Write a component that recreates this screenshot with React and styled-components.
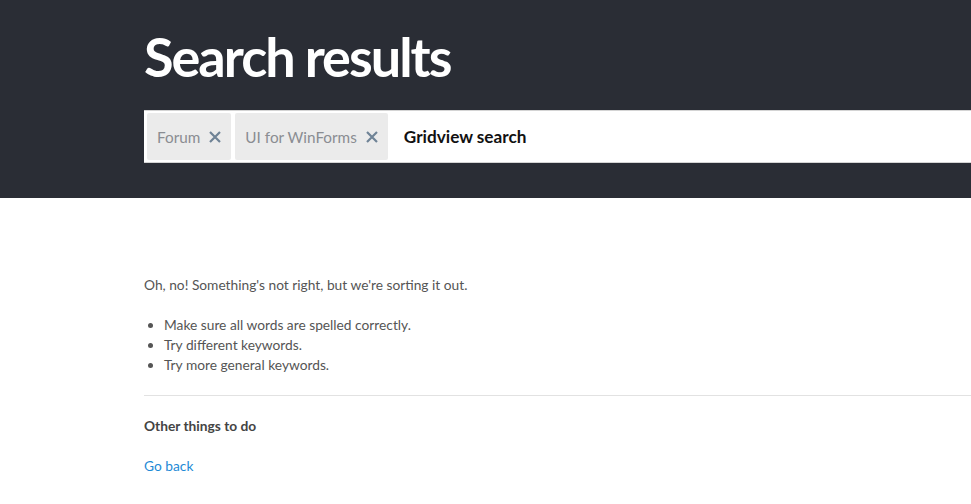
import React from "react";
import styled, { createGlobalStyle } from "styled-components";

const GlobalStyle = createGlobalStyle`
  body {
    margin: 0;
    font-family: "Lato", "Open Sans", sans-serif;
    background: #fff;
  }
`;

const Header = styled.header`
  background: #2a2d35;
  height: 198px;
  padding-left: 144px;
  box-sizing: border-box;
  padding-top: 26px;
`;

const Title = styled.h1`
  margin: 0;
  color: #fff;
  font-size: 54px;
  font-weight: 700;
  line-height: 62px;
  letter-spacing: -2px;
`;

const SearchBox = styled.div`
  margin-top: 22px;
  height: 53px;
  background: #fff;
  border-top: 1px solid #d4d4d4;
  border-bottom: 1px solid #d4d4d4;
  box-sizing: border-box;
  display: flex;
  align-items: center;
  padding: 0 3px;
  gap: 4px;
`;

const Tag = styled.span`
  display: flex;
  align-items: center;
  gap: 9px;
  height: 47px;
  padding: 0 10px;
  background: #ebebeb;
  border-radius: 2px;
  color: #8a8d92;
  font-size: 15.3px;
`;

const Query = styled.span`
  margin-left: 12px;
  color: #111;
  font-size: 17.2px;
  font-weight: 700;
`;

const Main = styled.main`
  padding: 77px 0 0 144px;
  color: #555;
  font-size: 13.75px;
`;

const Lead = styled.p`
  margin: 0 0 20px;
  line-height: 20px;
`;

const Tips = styled.ul`
  margin: 0;
  padding-left: 20px;
  line-height: 20px;
`;

const Divider = styled.hr`
  border: 0;
  border-top: 1px solid #e2e2e2;
  margin: 20px 0 0;
`;

const SubTitle = styled.h3`
  margin: 20px 0 0;
  font-size: 13.75px;
  font-weight: 700;
  color: #444;
  line-height: 20px;
`;

const Link = styled.a`
  display: block;
  margin-top: 20px;
  color: #1e8ad6;
  text-decoration: none;
  line-height: 20px;
`;

const CloseIcon = () => (
  <svg width="12" height="12" viewBox="0 0 12 12">
    <path d="M1 1L11 11M11 1L1 11" stroke="#6f8396" strokeWidth="2.2" />
  </svg>
);

export default function App() {
  return (
    <>
      <GlobalStyle />
      <Header>
        <Title>Search results</Title>
        <SearchBox>
          <Tag>
            Forum <CloseIcon />
          </Tag>
          <Tag>
            UI for WinForms <CloseIcon />
          </Tag>
          <Query>Gridview search</Query>
        </SearchBox>
      </Header>
      <Main>
        <Lead>Oh, no! Something's not right, but we're sorting it out.</Lead>
        <Tips>
          <li>Make sure all words are spelled correctly.</li>
          <li>Try different keywords.</li>
          <li>Try more general keywords.</li>
        </Tips>
        <Divider />
        <SubTitle>Other things to do</SubTitle>
        <Link href="#">Go back</Link>
      </Main>
    </>
  );
}
